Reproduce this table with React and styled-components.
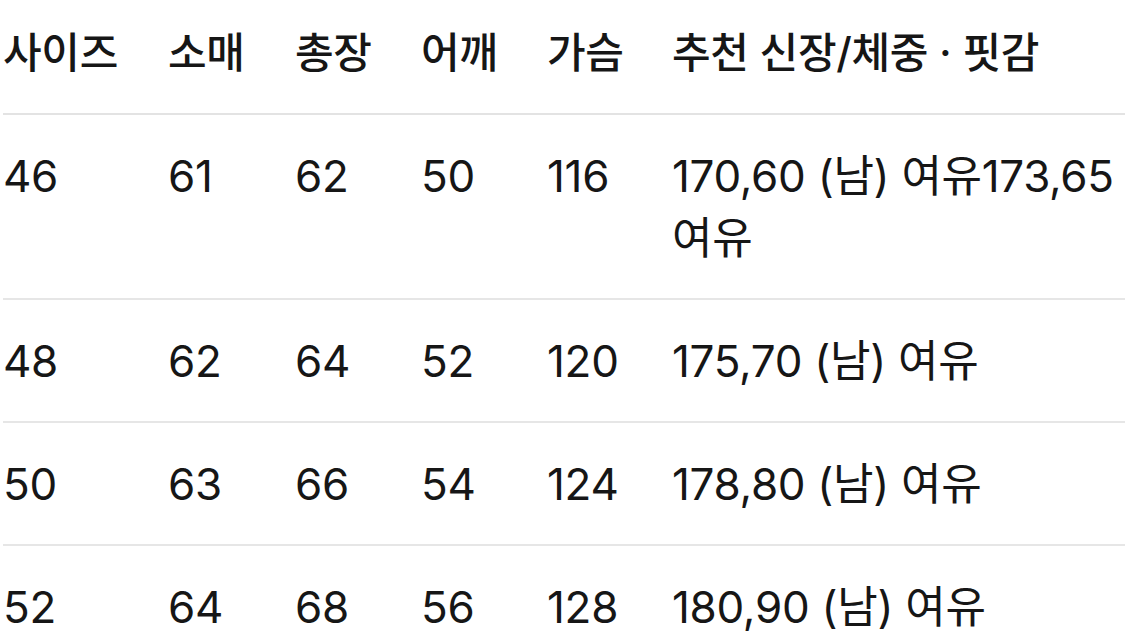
import styled, { createGlobalStyle } from "styled-components";

const GlobalStyle = createGlobalStyle`
  html, body {
    margin: 0;
    padding: 0;
    background: #fff;
  }
  body {
    font-family: Inter, "Noto Sans CJK KR", sans-serif;
    color: #161616;
    overflow: hidden;
  }
`;

const headers = ["사이즈", "소매", "총장", "어깨", "가슴", "추천 신장/체중 · 핏감"];

const rows = [
  ["46", "61", "62", "50", "116", "170,60 (남) 여유173,65 여유"],
  ["48", "62", "64", "52", "120", "175,70 (남) 여유"],
  ["50", "63", "66", "54", "124", "178,80 (남) 여유"],
  ["52", "64", "68", "56", "128", "180,90 (남) 여유"],
];

const App = () => {
  return (
    <>
      <GlobalStyle />
      <Table>
        <HeadRow>
          {headers.map((h) => (
            <HeadCell key={h}>{h}</HeadCell>
          ))}
        </HeadRow>
        {rows.map((row) => (
          <Row key={row[0]}>
            {row.map((value, i) => (
              <Cell key={i}>{value}</Cell>
            ))}
          </Row>
        ))}
      </Table>
    </>
  );
};

export default App;

const Table = styled.div`
  margin-top: -8px;
  margin-left: 3px;
  width: 1140px;
`;

const Row = styled.div`
  display: grid;
  grid-template-columns: 165px 127px 126px 126px 125px 455px;
  border-bottom: 2px solid #e6e6e6;
  &:last-child {
    border-bottom: none;
  }
`;

const HeadRow = styled(Row)`
  border-bottom: 2px solid #e3e3e3;
`;

const Cell = styled.div`
  padding: 30px 0 29px;
  font-size: 44px;
  line-height: 62px;
  font-weight: 400;
  letter-spacing: -0.3px;
`;

const HeadCell = styled(Cell)`
  font-size: 42px;
  font-weight: 500;
`;
